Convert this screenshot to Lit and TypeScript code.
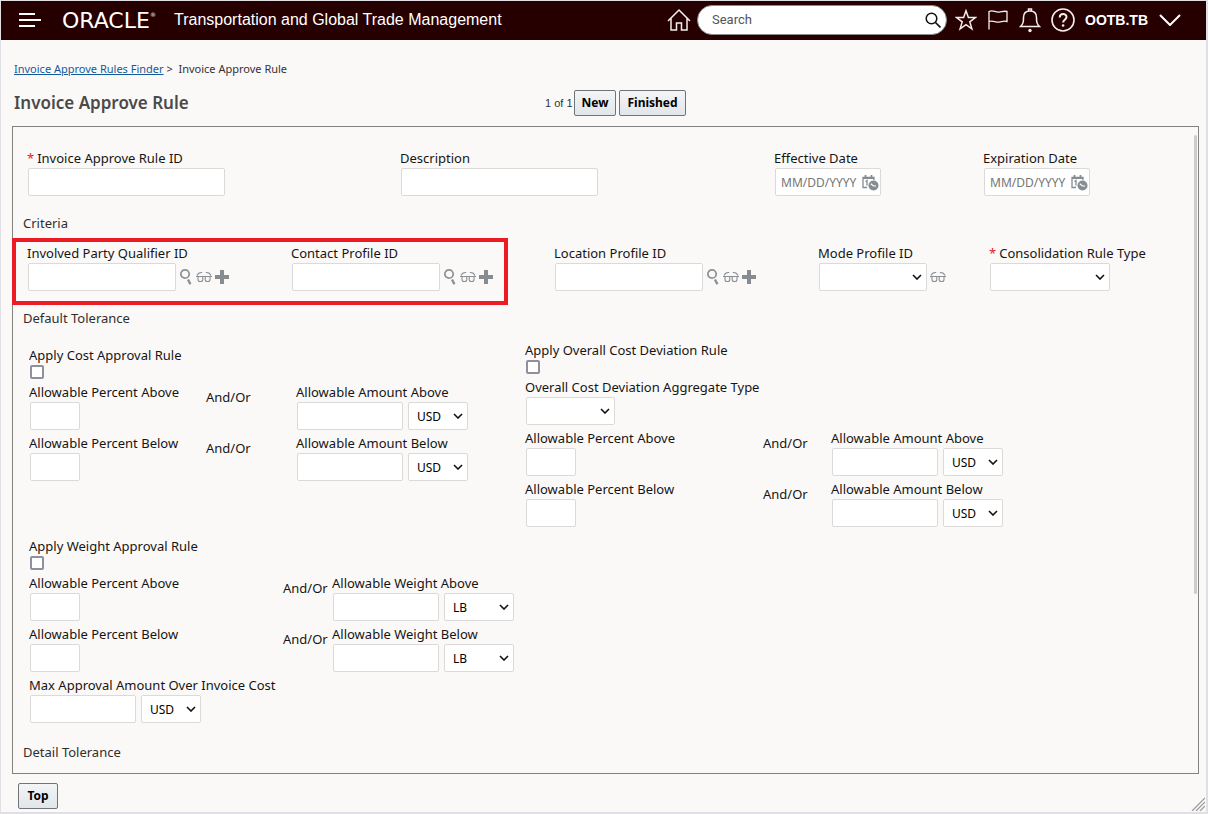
import { LitElement, html, css, svg, nothing, TemplateResult } from "lit";
import { customElement } from "lit/decorators.js";

const chevron = html`<svg class="chev" viewBox="0 0 10 6" aria-hidden="true">
  <path d="M1 1l4 4 4-4" fill="none" stroke="#111" stroke-width="1.6" />
</svg>`;

const finderIcon = svg`<svg viewBox="0 0 14 18" width="14" height="18" aria-hidden="true">
  <circle cx="6" cy="6" r="4.2" fill="none" stroke="#8b9095" stroke-width="1.7"/>
  <path d="M9 11.5l2.4 4.8" stroke="#8b9095" stroke-width="2.4" fill="none"/>
</svg>`;

const glassesIcon = svg`<svg viewBox="0 0 16 12" width="16" height="12" aria-hidden="true">
  <g fill="none" stroke="#8b9095" stroke-width="1.1">
    <path d="M0 5.5h16M1 4.5q1.4-3.4 5.2-3M15 4.5q-1.4-3.4-5.2-3"/>
    <path d="M2 5.5v3q0 2 2 2h.8q2 0 2-2v-3M9.200 5.500v3q0 2 2 2h.8q2 0 2-2v-3"/>
  </g>
</svg>`;

const plusIcon = svg`<svg viewBox="0 0 14 14" width="14" height="14" aria-hidden="true">
  <path d="M5 0h4v5h5v4H9v5H5V9H0V5h5z" fill="#878c90"/>
</svg>`;

const calendarIcon = svg`<svg viewBox="0 0 17 16" width="17" height="16" aria-hidden="true">
  <path d="M5 12.500H1V2.500h11V5" fill="none" stroke="#878c90" stroke-width="1.300"/>
  <path d="M1 3h11M3.500 0v4M9.500 0v4" stroke="#878c90" stroke-width="1.800" fill="none"/>
  <path d="M3.500 6.500l1.500-1v5" stroke="#878c90" stroke-width="1.300" fill="none"/>
  <circle cx="11.500" cy="10.500" r="5" fill="#878c90"/>
  <path d="M8.800 8.800l2.700 2.200h2.600" stroke="#fff" stroke-width="1.200" fill="none"/>
</svg>`;

@customElement("app-root")
export class AppRoot extends LitElement {
  static styles = css`
    :host {
      display: block;
      font-family: "Noto Sans", "Open Sans", sans-serif;
      font-size: 13px;
      line-height: 20px;
      color: #161513;
    }
    * {
      box-sizing: border-box;
    }
    .page {
      min-height: 100vh;
      background: #fbf9f8;
      border: solid #e0e0e4;
      border-width: 1px 2px 2px 1px;
      position: relative;
    }
    button {
      font: inherit;
      cursor: pointer;
    }
    .bar {
      display: flex;
      align-items: center;
      height: 39px;
      padding: 0 25px 0 17px;
      background: #260000;
      color: #fff;
    }
    .ico {
      display: flex;
      padding: 0;
      border: 0;
      background: none;
      flex: none;
    }
    .logo {
      width: 112px;
      margin-left: 20px;
      font: 22px/26px "DejaVu Sans", sans-serif;
      display: flex;
    }
    .logo sup {
      font-size: 6px;
      line-height: 14px;
    }
    .product {
      flex: 1;
      font: 16px/20px "Liberation Sans", sans-serif;
      white-space: nowrap;
      padding-bottom: 2px;
    }
    .search {
      display: flex;
      align-items: center;
      width: 250px;
      height: 30px;
      margin: 0 8px 0 6px;
      padding: 0 5px 0 14px;
      background: #fff;
      border: 1px solid #8a8a8a;
      border-radius: 15px;
    }
    .search input {
      flex: 1;
      min-width: 0;
      padding: 0;
      border: 0;
      outline: 0;
      background: none;
      font: 13px/20px Roboto, sans-serif;
    }
    .search input::placeholder {
      color: #555;
      opacity: 1;
    }
    .tools {
      display: flex;
      align-items: center;
      gap: 10px;
      padding-bottom: 1px;
    }
    .bar > .ico,
    .search {
      position: relative;
      bottom: 1px;
    }
    .user {
      display: flex;
      align-items: center;
      gap: 11px;
      padding: 0;
      border: 0;
      background: none;
      color: #fff;
      font: bold 14px/20px "Liberation Sans", sans-serif;
    }
    .crumbs {
      padding: 19px 13px 0;
      font-size: 11px;
      color: #333;
    }
    .crumbs a {
      color: #13599b;
    }
    .head {
      display: flex;
      align-items: center;
      padding: 9px 12px 8px 13px;
    }
    .head h1 {
      flex: 0 0 45%;
      margin: 0;
      font-size: 17px;
      line-height: 30px;
      font-weight: 600;
      color: #4c4a48;
    }
    .count {
      font: 11px/20px "Liberation Sans", sans-serif;
      color: #333;
      margin-right: 1px;
    }
    .btn {
      height: 26px;
      min-width: 40px;
      padding: 0 7px;
      border: 1px solid #6f7478;
      border-radius: 2px;
      background: linear-gradient(#f3f5f7, #e1e6ea);
      font: bold 12px/20px "Noto Sans", sans-serif;
      color: #000;
    }
    .btn + .btn {
      margin-left: 3px;
    }
    .panel {
      position: relative;
      margin: 0 7px 0 11px;
      padding: 21px 0 11px 14px;
      border: 1px solid #848280;
    }
    .thumb {
      position: absolute;
      top: 8px;
      right: 1px;
      width: 3px;
      height: 71%;
      border-radius: 2px;
      background: #ccc;
    }
    .general {
      display: grid;
      grid-template-columns: 373fr 374fr 209fr 215fr;
    }
    .criteria {
      position: relative;
      display: grid;
      grid-template-columns: 264fr 263fr 264fr 171fr 209fr;
    }
    .mark {
      position: absolute;
      top: -5px;
      left: -15px;
      width: calc(45% - 31px);
      height: 67px;
      border: 4px solid #ed1c24;
      pointer-events: none;
    }
    h2 {
      margin: 17px 0 10px -4px;
      font-size: 13px;
      line-height: 20px;
      font-weight: 400;
      color: #302e2c;
    }
    .field {
      display: flex;
      flex-direction: column;
      min-width: 0;
    }
    .field label {
      white-space: nowrap;
    }
    .req {
      color: #e21d1d;
      margin-right: 3px;
    }
    .row {
      display: flex;
      align-items: center;
      padding-left: 1px;
    }
    .row input,
    .row select {
      height: 28px;
      margin: 0;
      border: 1px solid #dbdad8;
      border-radius: 2px;
      background: #fff;
      font: 12px/20px "Noto Sans", sans-serif;
      color: #000;
    }
    .row input {
      padding: 0 5px;
    }
    .row input::placeholder {
      color: #757575;
      opacity: 1;
    }
    .row input[type="checkbox"] {
      appearance: none;
      width: 14px;
      height: 14px;
      padding: 0;
      border: 2px solid #8f8f9d;
    }
    .row select {
      appearance: none;
      width: 100%;
      padding: 1px 8px 0;
    }
    .pick,
    .date {
      position: relative;
      display: flex;
    }
    .chev {
      position: absolute;
      right: 5px;
      top: 11px;
      width: 10px;
      height: 6px;
      pointer-events: none;
    }
    .date .ico {
      position: absolute;
      right: 2px;
      top: 7px;
    }
    .lookups {
      display: flex;
      align-items: center;
      gap: 3px;
      padding-left: 3px;
    }
    .w50 { width: 50px; }
    .w60 { width: 60px; }
    .w70 { width: 70px; }
    .w89 { width: 89px; }
    .w106 { width: 106px; }
    .w108 { width: 108px; }
    .w120 { width: 120px; }
    .w148 { width: 148px; }
    .w197 { width: 197px; }
    .row .unit {
      margin-left: 5px;
    }
    .cols {
      display: grid;
      grid-template-columns: 496fr 673fr;
      padding-left: 2px;
      margin-top: 12px;
    }
    .stack {
      display: flex;
      flex-direction: column;
      gap: 3px;
    }
    .cost {
      padding-top: 5px;
    }
    .line {
      display: grid;
    }
    .cost .line {
      grid-template-columns: 177fr 90fr 229fr;
    }
    .overall .line {
      grid-template-columns: 238fr 68fr 367fr;
    }
    .weight {
      padding-left: 2px;
      margin-top: 9px;
    }
    .weight .line {
      grid-template-columns: 254fr 49fr 866fr;
    }
    .andor {
      padding-top: 5px;
      white-space: nowrap;
    }
    .weight + h2 {
      margin: 19px 0 0 -4px;
    }
    .foot {
      padding: 9px 17px 3px;
      display: flex;
    }
    .grip {
      position: absolute;
      right: 1px;
      bottom: 1px;
    }
  `;

  private seq = 0;

  private nextId() {
    return `f${this.seq++}`;
  }

  private label(id: string, text: string, req = false) {
    return html`<label for=${id}>${req ? html`<span class="req">*</span>` : nothing}${text}</label>`;
  }

  private select(id: string, cls: string, value = "", name = "") {
    return html`<span class="pick ${cls}">
      <select id=${id} aria-label=${name || nothing}><option>${value}</option></select>${chevron}
    </span>`;
  }

  private text(label: string, cls: string, req = false, after: TemplateResult | typeof nothing = nothing) {
    const id = this.nextId();
    return html`<div class="field">
      ${this.label(id, label, req)}
      <div class="row"><input id=${id} type="text" class=${cls} />${after}</div>
    </div>`;
  }

  private profile(label: string) {
    return this.text(label, "w148", false, html`<span class="lookups">
      <button class="ico" aria-label="Find ${label}">${finderIcon}</button>
      <button class="ico" aria-label="View ${label}">${glassesIcon}</button>
      <button class="ico" aria-label="New ${label}">${plusIcon}</button>
    </span>`);
  }

  private date(label: string) {
    const id = this.nextId();
    return html`<div class="field">
      ${this.label(id, label)}
      <div class="row"><span class="date">
        <input id=${id} type="text" class="w106" placeholder="MM/DD/YYYY" />
        <button class="ico" aria-label="Choose ${label}">${calendarIcon}</button>
      </span></div>
    </div>`;
  }

  private choice(label: string, cls: string, req = false, after: TemplateResult | typeof nothing = nothing) {
    const id = this.nextId();
    return html`<div class="field">
      ${this.label(id, label, req)}
      <div class="row">${this.select(id, cls)}${after}</div>
    </div>`;
  }

  private check(label: string) {
    const id = this.nextId();
    return html`<div class="field">
      ${this.label(id, label)}
      <div class="row"><input id=${id} type="checkbox" /></div>
    </div>`;
  }

  private measure(label: string, unit: string, cls: string) {
    return this.text(label, "w106", false, this.select(this.nextId(), `unit ${cls}`, unit, `${label} unit`));
  }

  private limits(kind: string, unit: string, cls: string) {
    return ["Above", "Below"].map((side) => html`<div class="line">
      ${this.text(`Allowable Percent ${side}`, "w50")}
      <span class="andor">And/Or</span>
      ${this.measure(`Allowable ${kind} ${side}`, unit, cls)}
    </div>`);
  }

  render() {
    this.seq = 0;
    return html`
      <div class="page">
        <header class="bar">
          <button class="ico" aria-label="Menu">
            <svg viewBox="0 0 24 16" width="24" height="16"><path d="M1 2h16M1 8h22M1 14h16" stroke="#fff" stroke-width="2"/></svg>
          </button>
          <span class="logo">ORACLE<sup>®</sup></span>
          <span class="product">Transportation and Global Trade Management</span>
          <button class="ico" aria-label="Home">
            <svg viewBox="0 0 24 24" width="24" height="24"><path d="M1 13L12 2l11 11M4 10.500V22h5.500v-7h5v7H20V10.500" fill="none" stroke="#f4efec" stroke-width="1.500"/></svg>
          </button>
          <span class="search">
            <input type="text" aria-label="Search" placeholder="Search" />
            <button class="ico" aria-label="Run search">
              <svg viewBox="0 0 16 16" width="16" height="16"><circle cx="6.500" cy="6.500" r="5.300" fill="none" stroke="#111" stroke-width="1.500"/><path d="M10.500 10.500l5 5" stroke="#111" stroke-width="1.700"/></svg>
            </button>
          </span>
          <span class="tools">
            <button class="ico" aria-label="Favorites">
              <svg viewBox="0 0 22 22" width="22" height="22"><path d="M11 1.800l2.400 6.800h7l-5.600 4.300 2.100 7L11 15.700l-5.900 4.200 2.100-7L1.600 8.600h7z" fill="none" stroke="#f4efec" stroke-width="1.500"/></svg>
            </button>
            <button class="ico" aria-label="Flags">
              <svg viewBox="0 0 22 22" width="22" height="22"><path d="M2 20.500V2.500c4-2 6 1 10 .6 3-.2 4-1.400 8-.6v10c-4-1-5 .4-8 .6-4 .2-6-2-10-.6" fill="none" stroke="#f4efec" stroke-width="1.300"/></svg>
            </button>
            <button class="ico" aria-label="Notifications">
              <svg viewBox="0 0 22 26" width="22" height="26"><path d="M1.500 19.500c3-3 3-5 3-9 0-4 2.500-6.500 6.500-6.500s6.500 2.500 6.500 6.500c0 4 0 6 3 9zM9.500 4V2h3v2" fill="none" stroke="#f4efec" stroke-width="1.500"/><circle cx="11" cy="23.500" r="1.700" fill="#f4efec"/></svg>
            </button>
            <button class="ico" aria-label="Help">
              <svg viewBox="0 0 24 24" width="24" height="24"><circle cx="12" cy="12" r="11" fill="none" stroke="#f4efec" stroke-width="1.600"/><path d="M8.700 9.500c0-4.600 6.800-4.400 6.800-.4 0 2.600-3.400 2.600-3.400 5.400" fill="none" stroke="#f4efec" stroke-width="2"/><circle cx="12.100" cy="17.500" r="1.300" fill="#f4efec"/></svg>
            </button>
            <button class="user">OOTB.TB
              <svg viewBox="0 0 22 12" width="22" height="12"><path d="M1 1l10 10L21 1" fill="none" stroke="#fff" stroke-width="2"/></svg>
            </button>
          </span>
        </header>

        <nav class="crumbs"><a href="#">Invoice Approve Rules Finder</a> &gt;&nbsp; Invoice Approve Rule</nav>
        <div class="head">
          <h1>Invoice Approve Rule</h1>
          <span class="count">1 of 1</span>
          <button class="btn">New</button>
          <button class="btn">Finished</button>
        </div>

        <main class="panel">
          <div class="general">
            ${this.text("Invoice Approve Rule ID", "w197", true)}
            ${this.text("Description", "w197")}
            ${this.date("Effective Date")}
            ${this.date("Expiration Date")}
          </div>

          <h2>Criteria</h2>
          <div class="criteria">
            ${this.profile("Involved Party Qualifier ID")}
            ${this.profile("Contact Profile ID")}
            ${this.profile("Location Profile ID")}
            ${this.choice("Mode Profile ID", "w108", false, html`<span class="lookups">
              <button class="ico" aria-label="View Mode Profile ID">${glassesIcon}</button>
            </span>`)}
            ${this.choice("Consolidation Rule Type", "w120", true)}
            <div class="mark"></div>
          </div>

          <h2>Default Tolerance</h2>
          <div class="cols">
            <section class="stack cost">
              ${this.check("Apply Cost Approval Rule")}
              ${this.limits("Amount", "USD", "w60")}
            </section>
            <section class="stack overall">
              ${this.check("Apply Overall Cost Deviation Rule")}
              ${this.choice("Overall Cost Deviation Aggregate Type", "w89")}
              ${this.limits("Amount", "USD", "w60")}
            </section>
          </div>
          <section class="stack weight">
            ${this.check("Apply Weight Approval Rule")}
            ${this.limits("Weight", "LB", "w70")}
            ${this.measure("Max Approval Amount Over Invoice Cost", "USD", "w60")}
          </section>

          <h2>Detail Tolerance</h2>
          <div class="thumb"></div>
        </main>

        <div class="foot"><button class="btn">Top</button></div>
        <svg class="grip" viewBox="0 0 14 14" width="14" height="14" aria-hidden="true">
          <path d="M1 14L14 1M5 14l9-9M9 14l5-5" stroke="#999" stroke-width="1.200"/>
        </svg>
      </div>
    `;
  }
}
